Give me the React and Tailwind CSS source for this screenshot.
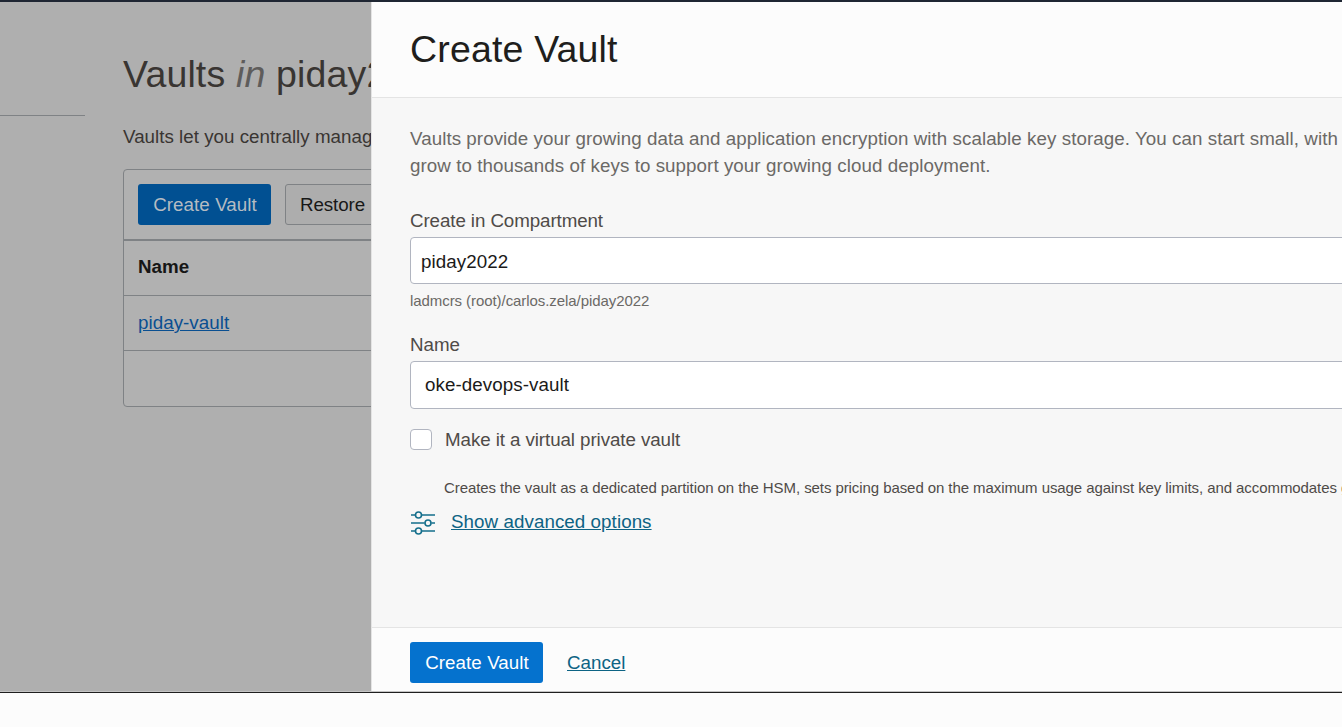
function SlidersIcon() {
  return (
    <svg width="24" height="24" viewBox="0 0 24 24" fill="none" stroke="#156f8c" strokeWidth="1.6" className="mt-[3px] ml-px shrink-0">
      <path d="M0 4H4.4M11 4H24M0 12H13.6M20.4 12H24M0 20H4.4M11 20H24" />
      <circle cx="7.5" cy="4" r="3" />
      <circle cx="17" cy="12" r="3" />
      <circle cx="7.5" cy="20" r="3" />
    </svg>
  );
}

function VaultList() {
  return (
    <div className="flex w-[371px] shrink-0 overflow-hidden bg-[#afafaf] whitespace-nowrap">
      <aside className="mt-[113px] h-px w-[85px] shrink-0 bg-[#7f8285]" />
      <main className="ml-[38px] w-[600px] shrink-0">
        <h1 className="mt-[48px] text-[37.5px] leading-[48px] tracking-[0.15px] text-[#393532]">
          Vaults <em className="text-[#5e5c5b]">in</em> piday2022
        </h1>
        <p className="mt-[25px] text-[18.75px] leading-[28px] tracking-[0.02px] text-[#393532]">
          Vaults let you centrally manage
        </p>
        <section className="mt-[18px] flex h-[238px] flex-col rounded-[4px] border border-[#7f8285] bg-[#b1b1b1] text-[18.75px] leading-[28px]">
          <div className="flex h-[71px] gap-[14px] border-b-2 border-[#7f8285] py-[14px] pl-[14px]">
            <button className="h-[41px] w-[133px] rounded-[3px] bg-[#015092] pl-px tracking-[0.06px] text-[#b5bcc2]">Create Vault</button>
            <button className="h-[41px] w-[180px] rounded-[3px] border border-[#7f8285] bg-[#adadad] pl-[14px] text-left tracking-[-0.08px] [word-spacing:2px] text-[#181818]">
              Restore Vault
            </button>
          </div>
          <div className="flex h-[55px] items-center border-b border-[#7f8285] pl-[14px] pb-[2px] font-bold text-[#161616]">Name</div>
          <div className="flex h-[55px] items-center border-b border-[#7f8285] pl-[14px]">
            <a className="tracking-[0.05px] text-[#0a4f91] underline">piday-vault</a>
          </div>
        </section>
      </main>
    </div>
  );
}

function CreateVaultPanel() {
  return (
    <div className="flex min-w-0 flex-1 flex-col overflow-hidden border-l border-[#e4e4e4] bg-[#f7f7f7] text-[18.75px] leading-[28px] whitespace-nowrap text-[#4f4b48]">
      <header className="h-[96px] shrink-0 border-b border-[#e4e4e4] bg-[#fcfcfc] pt-[23px] pl-[38px]">
        <h2 className="text-[37.5px] leading-[48px] tracking-[0.17px] text-[#201e1c]">Create Vault</h2>
      </header>
      <div className="flex w-[1100px] flex-1 flex-col pl-[38px]">
        <p className="mt-[27px] leading-[27px] tracking-[0.062px] text-[#6b6966]">
          Vaults provide your growing data and application encryption with scalable key storage. You can start small, with
          <br />
          grow to thousands of keys to support your growing cloud deployment.
        </p>
        <label className="mt-[28px] tracking-[-0.09px]">Create in Compartment</label>
        <div className="mt-[2px] flex h-[47px] items-center rounded-[4px] border border-[#b1b5c0] bg-white pt-[2px] pl-[10px] tracking-[0.08px] text-[#1b1a19]">
          piday2022
        </div>
        <div className="mt-[7px] text-[15px] leading-[20px] tracking-[-0.07px] text-[#6b6966]">ladmcrs (root)/carlos.zela/piday2022</div>
        <label className="mt-[20px]">Name</label>
        <div className="mt-[2px] flex h-[48px] items-center rounded-[4px] border border-[#b1b5c0] bg-white pl-[14px] tracking-[0.07px] text-[#1b1a19]">
          oke-devops-vault
        </div>
        <div className="mt-[17px] flex items-start gap-[13px]">
          <span className="mt-[3px] h-[21px] w-[22px] rounded-[4px] border border-[#b1b5c0] bg-white" />
          <span className="tracking-[-0.08px]">Make it a virtual private vault</span>
        </div>
        <p className="mt-[24px] pl-[34px] text-[15px] leading-[20px] tracking-[-0.077px]">
          Creates the vault as a dedicated partition on the HSM, sets pricing based on the maximum usage against key limits, and accommodates g
        </p>
        <div className="mt-[10px] flex items-start gap-[16px] text-[#0d6384]">
          <SlidersIcon />
          <a className="tracking-[0.07px] underline">Show advanced options</a>
        </div>
      </div>
      <footer className="flex h-[64px] shrink-0 gap-[24px] border-t border-[#e4e4e4] bg-[#fcfcfc] pt-[14px] pl-[38px]">
        <button className="h-[41px] w-[133px] rounded-[3px] bg-[#0572ce] pl-px tracking-[0.06px] text-white">Create Vault</button>
        <a className="mt-[7px] h-[28px] text-[#0d6384] underline">Cancel</a>
      </footer>
    </div>
  );
}

export default function App() {
  return (
    <div className="flex h-[727px] w-[1342px] flex-col overflow-hidden bg-[#fcfcfc] font-['Liberation_Sans',Arial,sans-serif]">
      <div className="h-[2px] shrink-0 bg-[#1f2633]" />
      <div className="flex h-[689px] shrink-0">
        <VaultList />
        <CreateVaultPanel />
      </div>
      <div className="h-px shrink-0 bg-[#c4c4c4]" />
      <div className="h-px shrink-0 bg-[#1f1f1f]" />
    </div>
  );
}
